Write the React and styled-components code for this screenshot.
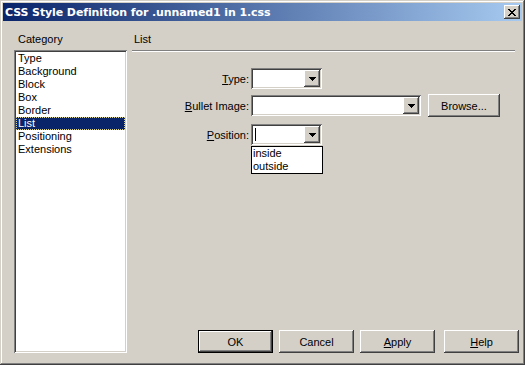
import React from 'react';
import styled, { createGlobalStyle, css } from 'styled-components';

const face = '#d4d0c8';

const GlobalStyle = createGlobalStyle`
  html, body {
    margin: 0;
    padding: 0;
    background: ${face};
  }
  body {
    font-family: "Liberation Sans", Arial, sans-serif;
    font-size: 11px;
    color: #000;
  }
`;

const raised = css`
  box-shadow:
    inset -1px -1px #404040,
    inset 1px 1px #ffffff,
    inset -2px -2px #808080,
    inset 2px 2px ${face};
`;

const sunken = css`
  box-shadow:
    inset 1px 1px #808080,
    inset -1px -1px #ffffff,
    inset 2px 2px #404040,
    inset -2px -2px ${face};
`;

const Window = styled.div`
  box-sizing: border-box;
  width: 525px;
  height: 365px;
  padding: 3px;
  display: flex;
  flex-direction: column;
  background: ${face};
  box-shadow:
    inset -1px -1px #404040,
    inset 1px 1px ${face},
    inset -2px -2px #808080,
    inset 2px 2px #ffffff;
`;

const TitleBar = styled.div`
  height: 18px;
  display: flex;
  align-items: center;
  justify-content: space-between;
  padding: 0 2px;
  background: linear-gradient(to right, #0a246a, #a6caf0);
  color: #fff;
  font-family: "DejaVu Sans", "Liberation Sans", sans-serif;
  font-weight: bold;
  font-size: 11px;
  letter-spacing: -0.1px;
`;

const CloseButton = styled.div`
  width: 16px;
  height: 14px;
  display: flex;
  align-items: center;
  justify-content: center;
  background: ${face};
  ${raised}
`;

const Body = styled.div`
  flex: 1;
  display: flex;
  padding: 12px 3px 9px 11px;
  min-height: 0;
`;

const CategoryColumn = styled.div`
  width: 113px;
  display: flex;
  flex-direction: column;
`;

const Caption = styled.div`
  height: 17px;
  line-height: 13px;
  padding-left: ${(p) => p.$indent || 0}px;
`;

const ListBox = styled.div`
  flex: 1;
  box-sizing: border-box;
  background: #fff;
  padding: 2px;
  ${sunken}
`;

const ListItem = styled.div`
  height: 13px;
  line-height: 13px;
  padding-left: 2px;
  box-sizing: border-box;
  ${(p) =>
    p.$selected &&
    css`
      background: #0a246a;
      color: #fff;
      outline: 1px dotted #d8d49c;
      outline-offset: -1px;
    `}
`;

const PanelColumn = styled.div`
  flex: 1;
  margin-left: 5px;
  display: flex;
  flex-direction: column;
`;

const Separator = styled.div`
  height: 1px;
  margin-right: 4px;
  background: #808080;
  border-bottom: 1px solid #ffffff;
`;

const Form = styled.div`
  display: grid;
  grid-template-columns: 117px 1fr;
  column-gap: 2px;
  align-items: center;
  margin-top: 16px;
`;

const Label = styled.div`
  text-align: right;
  margin-top: ${(p) => p.$top || 0}px;
`;

const Cell = styled.div`
  display: flex;
  align-items: center;
  gap: 7px;
  margin-top: ${(p) => p.$top || 0}px;
`;

const ComboWrap = styled.div`
  position: relative;
`;

const ComboField = styled.div`
  box-sizing: border-box;
  width: ${(p) => p.$width}px;
  height: 21px;
  padding: 2px;
  display: flex;
  align-items: stretch;
  background: #fff;
  ${sunken}
`;

const ComboText = styled.div`
  flex: 1;
  position: relative;
`;

const Caret = styled.div`
  position: absolute;
  left: 2px;
  top: 2px;
  width: 1px;
  height: 13px;
  background: #000;
`;

const DropButton = styled.div`
  width: 16px;
  height: 17px;
  display: flex;
  align-items: center;
  justify-content: center;
  background: ${face};
  ${raised}
`;

const DropList = styled.div`
  position: absolute;
  left: 0;
  top: 22px;
  width: 72px;
  box-sizing: border-box;
  border: 1px solid #000;
  background: #fff;
  z-index: 2;
`;

const DropItem = styled.div`
  height: 13px;
  line-height: 13px;
  padding-left: 1px;
`;

const PushButton = styled.div`
  box-sizing: border-box;
  width: ${(p) => p.$width || 75}px;
  height: 23px;
  display: flex;
  align-items: center;
  justify-content: center;
  background: ${face};
  margin-left: ${(p) => p.$gap || 0}px;
  ${raised}
  ${(p) =>
    p.$default &&
    css`
      border: 1px solid #000;
    `}
`;

const ButtonRow = styled.div`
  margin-top: auto;
  display: flex;
  justify-content: flex-end;
  gap: 6px;
`;

const pixels = (rows) =>
  rows.flatMap((row, y) => row.map(([x, w]) => <rect key={`${x}-${y}`} x={x} y={y} width={w} height={1} />));

const CloseGlyph = () => (
  <svg width="8" height="7" viewBox="0 0 8 7" shapeRendering="crispEdges" fill="#000">
    {pixels([
      [[0, 2], [6, 2]],
      [[1, 2], [5, 2]],
      [[2, 4]],
      [[3, 2]],
      [[2, 4]],
      [[1, 2], [5, 2]],
      [[0, 2], [6, 2]],
    ])}
  </svg>
);

const ArrowGlyph = () => (
  <svg width="7" height="4" viewBox="0 0 7 4" shapeRendering="crispEdges" fill="#000">
    {pixels([[[0, 7]], [[1, 5]], [[2, 3]], [[3, 1]]])}
  </svg>
);

const Combo = ({ width, caret, children }) => (
  <ComboWrap>
    <ComboField $width={width}>
      <ComboText>{caret && <Caret />}</ComboText>
      <DropButton>
        <ArrowGlyph />
      </DropButton>
    </ComboField>
    {children}
  </ComboWrap>
);

const categories = ['Type', 'Background', 'Block', 'Box', 'Border', 'List', 'Positioning', 'Extensions'];

export default function App() {
  return (
    <>
      <GlobalStyle />
      <Window>
        <TitleBar>
          <span>CSS Style Definition for .unnamed1 in 1.css</span>
          <CloseButton>
            <CloseGlyph />
          </CloseButton>
        </TitleBar>
        <Body>
          <CategoryColumn>
            <Caption $indent={4}>Category</Caption>
            <ListBox>
              {categories.map((item) => (
                <ListItem key={item} $selected={item === 'List'}>
                  {item}
                </ListItem>
              ))}
            </ListBox>
          </CategoryColumn>
          <PanelColumn>
            <Caption $indent={2}>List</Caption>
            <Separator />
            <Form>
              <Label>
                <u>T</u>ype:
              </Label>
              <Cell>
                <Combo width={71} />
              </Cell>
              <Label $top={5}>
                <u>B</u>ullet Image:
              </Label>
              <Cell $top={5}>
                <Combo width={170} />
                <PushButton $width={72}>Browse...</PushButton>
              </Cell>
              <Label $top={7}>
                <u>P</u>osition:
              </Label>
              <Cell $top={7}>
                <Combo width={71} caret>
                  <DropList>
                    <DropItem>inside</DropItem>
                    <DropItem>outside</DropItem>
                  </DropList>
                </Combo>
              </Cell>
            </Form>
            <ButtonRow>
              <PushButton $default>OK</PushButton>
              <PushButton>Cancel</PushButton>
              <PushButton>
                <span>
                  <u>A</u>pply
                </span>
              </PushButton>
              <PushButton $gap={3}>
                <span>
                  <u>H</u>elp
                </span>
              </PushButton>
            </ButtonRow>
          </PanelColumn>
        </Body>
      </Window>
    </>
  );
}
